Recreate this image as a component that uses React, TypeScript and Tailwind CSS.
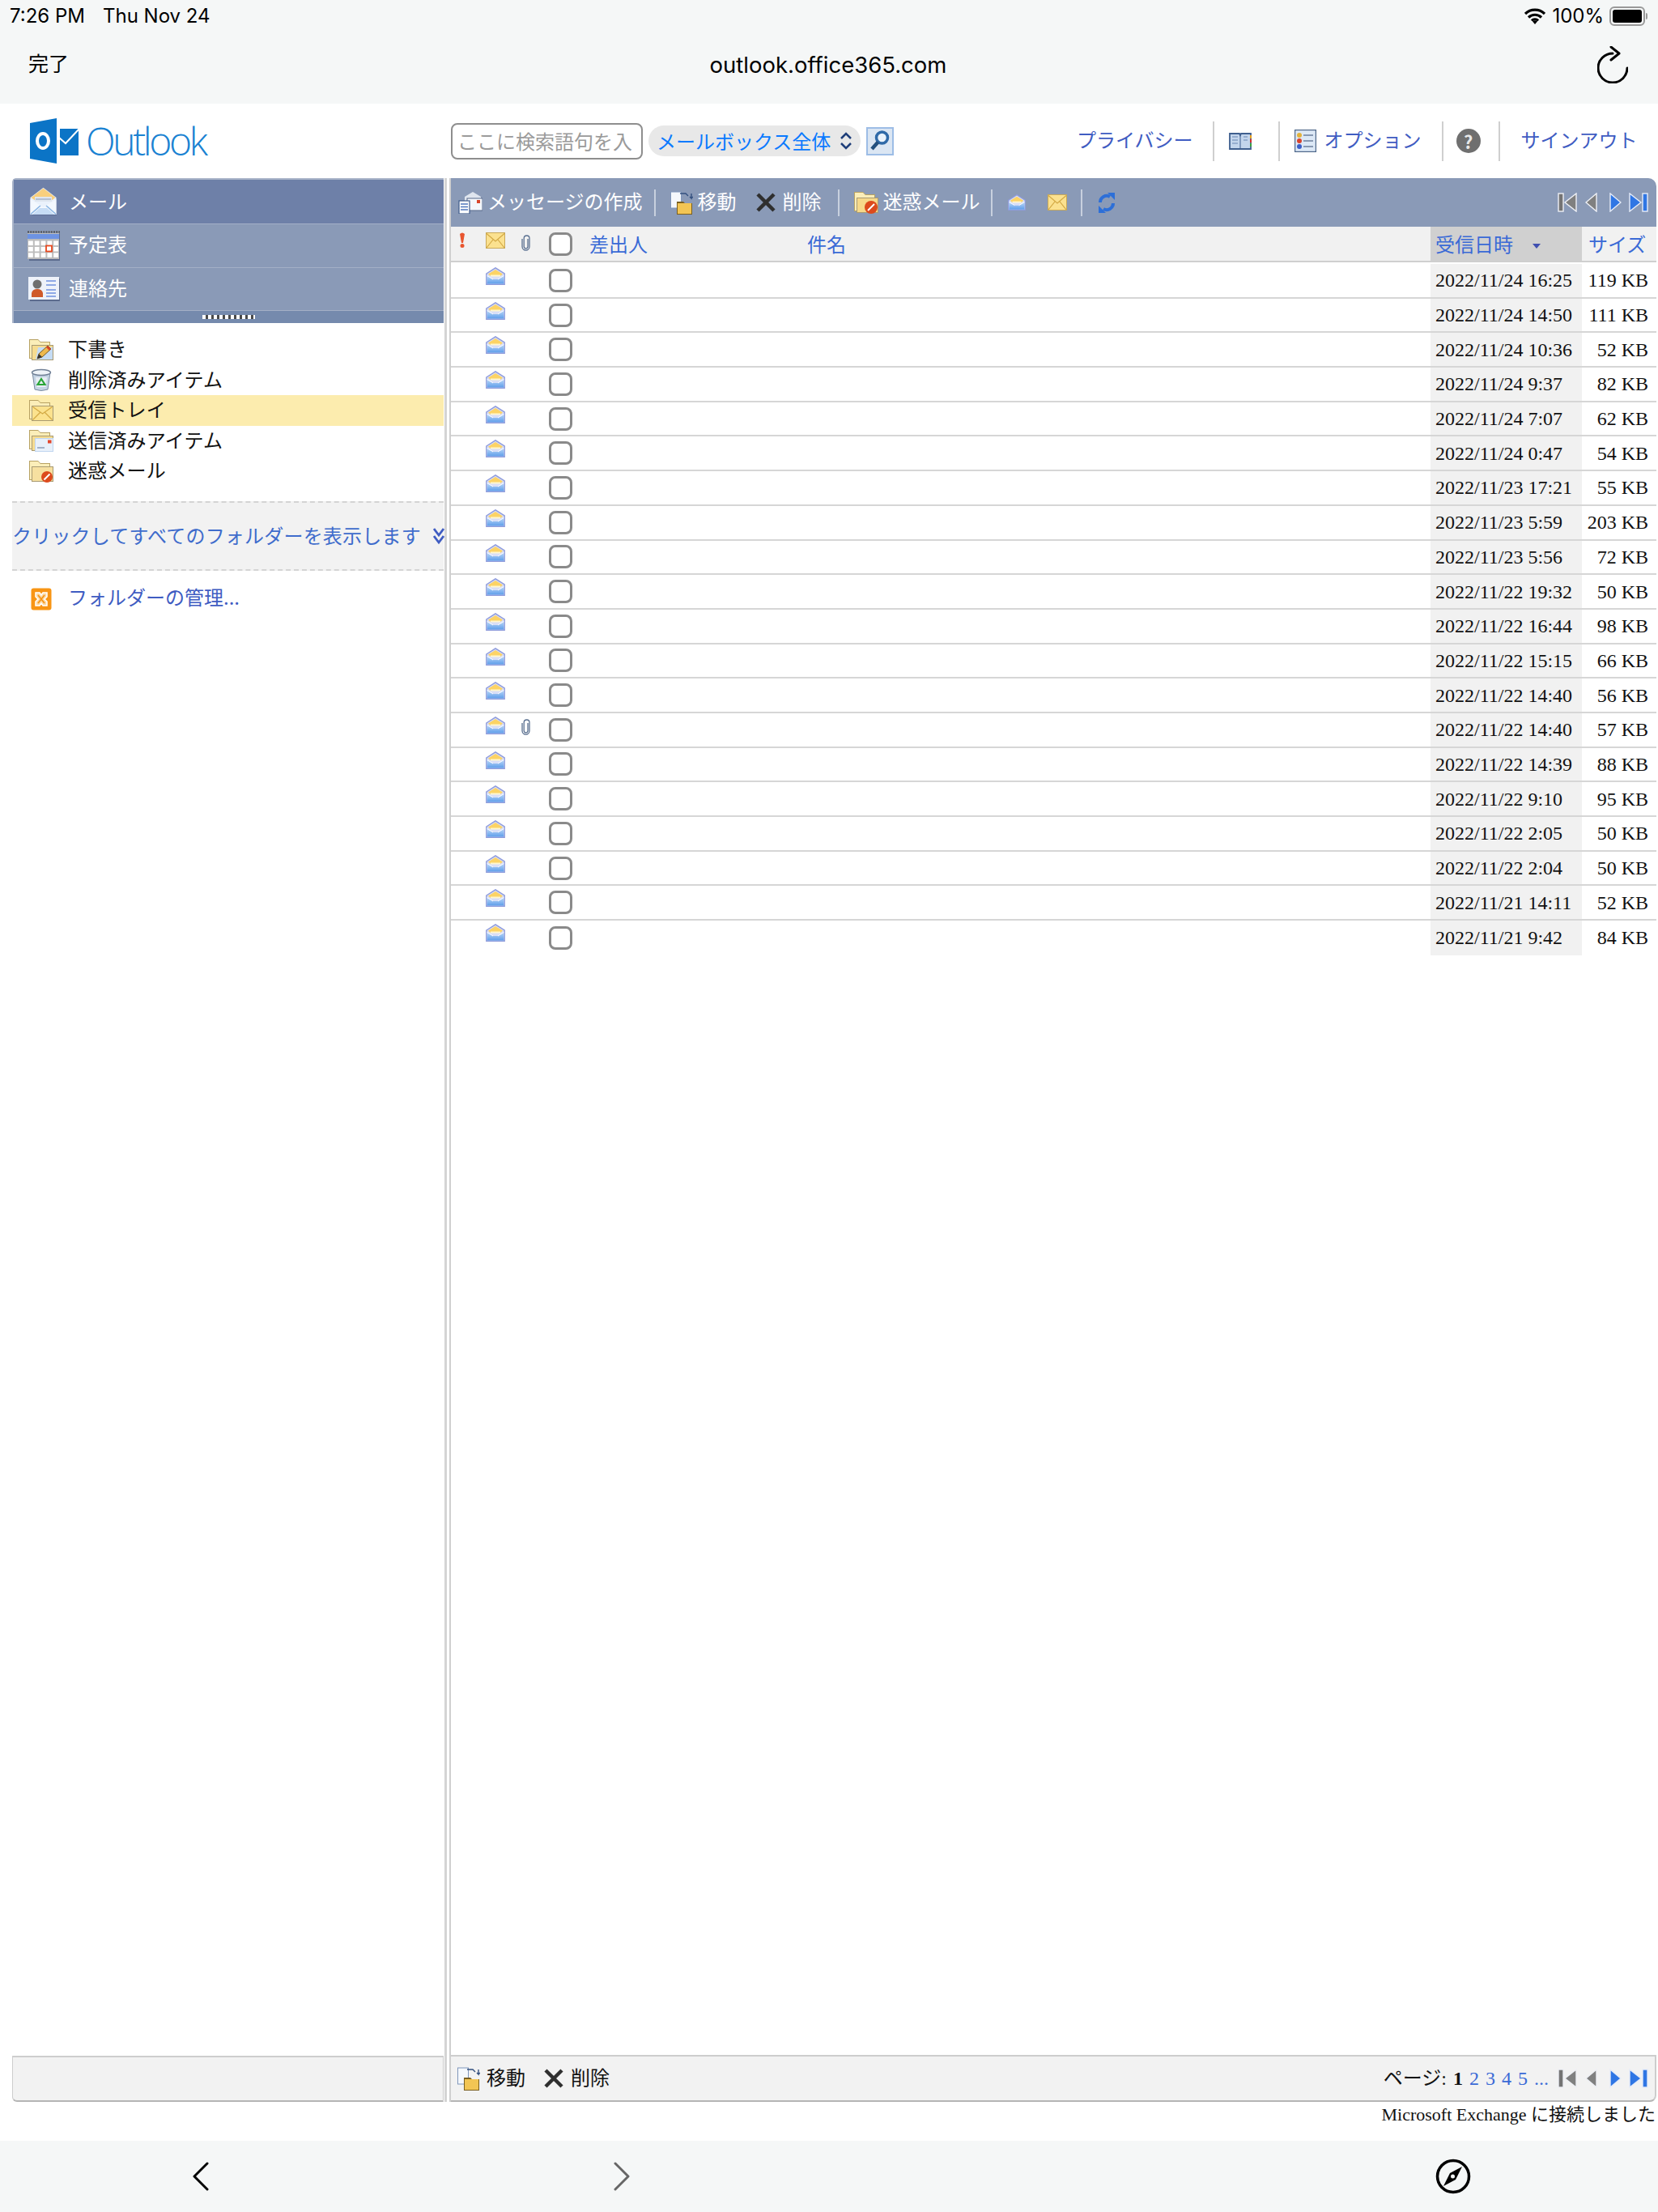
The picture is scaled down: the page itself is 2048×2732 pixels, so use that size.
import React from "react";

const rows: { date: string; size: string; clip?: boolean }[] = [
  { date: "2022/11/24 16:25", size: "119 KB" },
  { date: "2022/11/24 14:50", size: "111 KB" },
  { date: "2022/11/24 10:36", size: "52 KB" },
  { date: "2022/11/24 9:37", size: "82 KB" },
  { date: "2022/11/24 7:07", size: "62 KB" },
  { date: "2022/11/24 0:47", size: "54 KB" },
  { date: "2022/11/23 17:21", size: "55 KB" },
  { date: "2022/11/23 5:59", size: "203 KB" },
  { date: "2022/11/23 5:56", size: "72 KB" },
  { date: "2022/11/22 19:32", size: "50 KB" },
  { date: "2022/11/22 16:44", size: "98 KB" },
  { date: "2022/11/22 15:15", size: "66 KB" },
  { date: "2022/11/22 14:40", size: "56 KB" },
  { date: "2022/11/22 14:40", size: "57 KB", clip: true },
  { date: "2022/11/22 14:39", size: "88 KB" },
  { date: "2022/11/22 9:10", size: "95 KB" },
  { date: "2022/11/22 2:05", size: "50 KB" },
  { date: "2022/11/22 2:04", size: "50 KB" },
  { date: "2022/11/21 14:11", size: "52 KB" },
  { date: "2022/11/21 9:42", size: "84 KB" },
];

const serif = "font-['Liberation_Serif','Noto_Sans_CJK_JP',serif]";
const columns =
  "grid grid-cols-[35px_46px_30px_54px_270px_775px_187px_92px]";

function MailOpen({ className }: { className: string }) {
  return (
    <svg viewBox="0 0 24 22" className={className}>
      <defs>
        <linearGradient id="mailBody" x1="0" y1="0" x2="0" y2="1">
          <stop offset="0" stopColor="#bcd8f8" />
          <stop offset="1" stopColor="#5f9eea" />
        </linearGradient>
      </defs>
      <path d="M.8 8 12 .8 23.200 8v13.200H.8Z" fill="#d8def7" stroke="#8e9bdb" strokeWidth="1.400" />
      <path d="M3 8.500 12 3l9 5.500-3 2.500H6Z" fill="#fcd365" />
      <path d="M6 9.500h12v2H6Z" fill="#fff6cf" />
      <path d="M1.600 10.500 9 15h6l7.400-4.500v10H1.600Z" fill="url(#mailBody)" />
      <path d="M1.600 10.500 9 15M22.400 10.500 15 15" stroke="#fff" strokeWidth="1" />
    </svg>
  );
}

function MailOpenLarge() {
  return (
    <svg viewBox="0 0 34 36" className="h-[36px] w-[34px]">
      <path d="M2 35h31V15Z" fill="#5d6d96" />
      <path d="M.5 13 16.500.8 32.500 13v21H.5Z" fill="#eaf1fb" />
      <path d="M1.500 13 16.500 1.500l15 11.500-4 3h-22Z" fill="#f8cf7e" />
      <path d="M6 12h21v6H6Z" fill="#dfe6ef" />
      <path d="M7 15h19" stroke="#8a9ab7" strokeWidth="1" />
      <path d="M.5 15 16.500 25 32.500 15v19H.5Z" fill="#f3f8fe" />
      <path d="M1 33.500 13 23M32 33.500 20 23" stroke="#8cb6e4" strokeWidth="1.600" />
      <path d="M3 34h27l-9-8h-9Z" fill="#c6dcf5" />
    </svg>
  );
}

function Envelope({ className }: { className: string }) {
  return (
    <svg viewBox="0 0 24 20" className={className}>
      <rect x=".5" y=".5" width="23" height="19" fill="#fbe18f" stroke="#c9a958" />
      <path d="M1 1.500 12 11 23 1.500M1 19l8-10M23 19l-8-10" fill="none" stroke="#d3a944" strokeWidth="1.200" />
    </svg>
  );
}

function Clip({ className }: { className: string }) {
  return (
    <svg viewBox="0 0 15 20" className={className} fill="none">
      <path
        d="M10 5v9.500a2.400 2.400 0 0 1-4.800 0V4.400a3.400 3.400 0 0 1 6.800 0v10.200a4.500 4.500 0 0 1-9 0V5"
        stroke="#5a7090"
        strokeWidth="1.300"
      />
    </svg>
  );
}

function Checkbox() {
  return <span className="block h-[29px] w-[29px] rounded-[8px] border-[3px] border-[#8a8a8a] bg-white" />;
}

function FolderBase({ children, fill = "#f6dc8f" }: { children?: React.ReactNode; fill?: string }) {
  return (
    <svg viewBox="0 0 30 28" className="h-[28px] w-[30px]">
      <path d="M0 1h11l3 3h12v21H0Z" fill="#b8a263" />
      <path d="M1 2h10l3 3h11v19H1Z" fill="#fbeeb9" />
      <path d="M3 8h27v19H3Z" fill="#a99b73" />
      <path d="M4 9h25v17H4Z" fill={fill} />
      {children}
    </svg>
  );
}

function JunkBadge({ cx, cy, r }: { cx: number; cy: number; r: number }) {
  return (
    <>
      <circle cx={cx} cy={cy} r={r} fill="#dc4a1c" />
      <path d={`M${cx - r / 2} ${cy + r / 2}L${cx + r / 2} ${cy - r / 2}`} stroke="#fff" strokeWidth="2" />
    </>
  );
}

function DraftsIcon() {
  return (
    <FolderBase>
      <path d="M11 11h18v15H8Z" fill="#c5dcf5" />
      <path d="M10 25l2-6 11-10 4 4-11 10Z" fill="#eeb94e" stroke="#7a5a20" strokeWidth="1" />
      <path d="M21 11l4 4 2-2-4-4Z" fill="#d8452a" />
      <path d="M10 25l2-6 4 4Z" fill="#333" />
    </FolderBase>
  );
}

function DeletedIcon() {
  return (
    <svg viewBox="0 0 26 28" className="h-[28px] w-[26px]">
      <path d="M2 5h22l-3 21q-8 3-16 0Z" fill="#c5d4e4" stroke="#7b8ba0" strokeWidth="1" />
      <ellipse cx="13" cy="5" rx="11.500" ry="3.500" fill="#eef3f8" stroke="#6f7f95" strokeWidth="1.400" />
      <path d="M6 11h14l-1.500 12h-11Z" fill="#e8eef4" />
      <path d="M13 13l4.500 7h-9Z" fill="none" stroke="#2aa538" strokeWidth="2.200" />
    </svg>
  );
}

function InboxIcon() {
  return (
    <FolderBase fill="#fbe28e">
      <path d="M4.500 9.500 16.500 18 28.500 9.500M4.500 25.500l9-9M28.500 25.500l-9-9" fill="none" stroke="#d3a944" strokeWidth="1.200" />
    </FolderBase>
  );
}

function SentIcon() {
  return (
    <FolderBase>
      <path d="M7 11h23v17H7Z" fill="#c0d6f0" />
      <path d="M8 12h21v15H8Z" fill="#e8f0fa" />
      <rect x="23" y="13.500" width="4.500" height="4" fill="#e2462c" />
      <path d="M10 23h9" stroke="#8ea3bc" strokeWidth="1.600" />
    </FolderBase>
  );
}

function JunkFolderIcon() {
  return (
    <FolderBase fill="#f6e0a0">
      <JunkBadge cx={22} cy={21} r={7} />
    </FolderBase>
  );
}

function ManageIcon() {
  return (
    <svg viewBox="0 0 26 28" className="h-[28px] w-[26px]">
      <rect x=".5" y=".5" width="25" height="27" rx="3" fill="#f89514" />
      <path d="M6 6h5l2 3 2-3h5v5l-3 3 3 3v5h-5l-2-3-2 3H6v-5l3-3-3-3Z" fill="#fbd9a4" stroke="#fff" strokeWidth="1.500" />
      <path d="M9 9l8 10M17 9 9 19" stroke="#f89514" strokeWidth="1.800" />
    </svg>
  );
}

function CalendarIcon() {
  return (
    <svg viewBox="0 0 40 37" className="h-[37px] w-[40px]">
      <rect x="2" y="3" width="38" height="34" fill="#5c6c8e" />
      <path d="M0 1.500h40" stroke="#4b4b4b" strokeWidth="2" strokeDasharray="2 1.200" />
      <rect x="0" y="3" width="39" height="32" fill="#bcbcbc" />
      <rect x="0" y="4" width="39" height="6" fill="#6d93e2" />
      {[0, 1, 2].map((r) =>
        [0, 1, 2, 3, 4].map((c) => (
          <rect key={`${r}-${c}`} x={1 + c * 7.8} y={12.5 + r * 7.4} width="5.800" height="5.600" fill="#fff" />
        )),
      )}
      <rect x="23" y="18.500" width="7" height="7" fill="#fff" stroke="#e8491f" strokeWidth="1.800" />
    </svg>
  );
}

function ContactsIcon() {
  return (
    <svg viewBox="0 0 39 30" className="h-[30px] w-[39px]">
      <rect x="2" y="2" width="37" height="28" fill="#5c6c8e" />
      <rect x="0" y="0" width="38" height="28" fill="#eef2fa" />
      <circle cx="11" cy="9" r="5.500" fill="#6f6f6f" />
      <path d="M4 25v-5q1-5 7-5t7 5v5Z" fill="#cf5a2a" />
      <path d="M22 5h12M22 10h12M22 16h12M22 20h12M22 24h12" stroke="#8fa9e6" strokeWidth="1.800" />
    </svg>
  );
}

function ComposeIcon() {
  return (
    <svg viewBox="0 0 30 28" className="h-[28px] w-[30px]">
      <path d="M8 7l10-6 10 6v14H8Z" fill="#dfe5ee" />
      <rect x="11" y="9" width="19" height="15" fill="#f4f7fb" stroke="#57698a" strokeWidth="1" />
      <rect x="23" y="11" width="4" height="4" fill="#d8452a" />
      <rect x="1" y="12" width="13" height="16" fill="#fff" stroke="#3f5b8c" strokeWidth="1.200" />
      <path d="M3 16h9M3 19.500h9M3 23h9" stroke="#4f77bd" strokeWidth="1.400" />
    </svg>
  );
}

function MoveIcon() {
  return (
    <svg viewBox="0 0 28 29" className="h-[29px] w-[28px]">
      <rect x=".5" y="1" width="13" height="20" fill="#f5f8fc" stroke="#7f96bb" />
      <path d="M12 3h7l3 3M26 3v6l-2-2M26 9l2-2" fill="none" stroke="#33507f" strokeWidth="1.400" />
      <path d="M8 13h8l2 2h9v14H8Z" fill="#7a5f1f" />
      <rect x="9" y="15" width="17" height="13" fill="#f2c554" />
    </svg>
  );
}

function CrossIcon({ className }: { className: string }) {
  return (
    <svg viewBox="0 0 24 24" className={className}>
      <path d="M2 2l20 20M22 2 2 22" stroke="#2f2f2f" strokeWidth="4.500" />
    </svg>
  );
}

function JunkIcon() {
  return (
    <FolderBase fill="#f6d98a">
      <JunkBadge cx={21} cy={20} r={8} />
    </FolderBase>
  );
}

function RefreshBlue() {
  return (
    <svg viewBox="0 0 22 25" className="h-[25px] w-[22px]" fill="none">
      <path d="M3 12A8 8 0 0 1 15 5" stroke="#2d6fd8" strokeWidth="4" />
      <path d="M12 0h9v9Z" fill="#2d6fd8" />
      <path d="M19 13A8 8 0 0 1 7 20" stroke="#2d6fd8" strokeWidth="4" />
      <path d="M10 25H1v-9Z" fill="#2d6fd8" />
    </svg>
  );
}

function Pager() {
  return (
    <div className="flex items-center">
      <svg viewBox="0 0 24 24" className="h-[24px] w-[24px]">
        <rect x="1" y="1" width="6" height="22" fill="#747474" stroke="#eef0f5" strokeWidth="1.400" />
        <path d="M23 1v22L9 12Z" fill="#808080" stroke="#eef0f5" strokeWidth="1.400" />
      </svg>
      <svg viewBox="0 0 15 24" className="ml-[10px] h-[24px] w-[15px]">
        <path d="M14 1v22L1 12Z" fill="#808080" stroke="#eef0f5" strokeWidth="1.400" />
      </svg>
      <svg viewBox="0 0 15 24" className="ml-[15px] h-[24px] w-[15px]">
        <path d="M1 1v22l13-11Z" fill="#2f76e4" stroke="#e6ecf8" strokeWidth="1.400" />
      </svg>
      <svg viewBox="0 0 24 24" className="ml-[9px] h-[24px] w-[24px]">
        <path d="M1 1v22l14-11Z" fill="#2f76e4" stroke="#e6ecf8" strokeWidth="1.400" />
        <rect x="17" y="1" width="6" height="22" fill="#2f76e4" stroke="#e6ecf8" strokeWidth="1.400" />
      </svg>
    </div>
  );
}

function NavRow({ icon, label, active, height }: { icon: React.ReactNode; label: string; active?: boolean; height: string }) {
  return (
    <div
      className={`flex items-center border-b border-[#a3afc6] ${height} ${active ? "bg-[#6e80a8]" : "bg-[#8a9ab7]"}`}
    >
      <div className="flex w-[68px] justify-center pl-[6px]">{icon}</div>
      <span className={`${active ? "pb-[3px]" : "pb-[5px]"} text-[24px] leading-none text-white`}>{label}</span>
    </div>
  );
}

function FolderRow({ icon, label, active }: { icon: React.ReactNode; label: string; active?: boolean }) {
  return (
    <div className={`flex h-[37.5px] items-center ${active ? "bg-[#fcecae]" : ""}`}>
      <div className="flex w-[69px] justify-center pl-[2px]">{icon}</div>
      <span className="pb-[3px] text-[24px] leading-none tracking-[0.2px] text-[#111]">{label}</span>
    </div>
  );
}

function Sep({ className }: { className: string }) {
  return <span className={`block w-[2px] ${className}`} />;
}

function Label({ children, className = "" }: { children: React.ReactNode; className?: string }) {
  return <span className={`pb-[4px] ${className}`}>{children}</span>;
}

export default function App() {
  return (
    <div className="flex h-[2732px] w-[2048px] flex-col overflow-hidden bg-white font-['Noto_Sans_CJK_JP',sans-serif]">
      {/* iOS status + browser bar */}
      <div className="h-[128px] shrink-0 bg-[#f5f7f7] font-['Inter','Noto_Sans_CJK_JP',sans-serif] text-black">
        <div className="flex h-[40px] items-center justify-between pl-[12px] pr-[13px]">
          <div className="flex gap-[22px] text-[24px]">
            <span>7:26 PM</span>
            <span>Thu Nov 24</span>
          </div>
          <div className="flex items-center">
            <svg viewBox="0 0 26 20" className="h-[20px] w-[26px]">
              <path d="M1 7a17 17 0 0 1 24 0M5 11.500a11.500 11.500 0 0 1 16 0M9 15.500a5.500 5.500 0 0 1 8 0" fill="none" stroke="#000" strokeWidth="3.200" />
              <path d="M13 20l-3-3.500a4 4 0 0 1 6 0Z" fill="#000" />
            </svg>
            <span className="ml-[8px] text-[24px]">100%</span>
            <div className="ml-[7px] flex h-[24px] w-[44px] items-center rounded-[6px] border-2 border-[#999] p-[2px]">
              <span className="block h-full w-full rounded-[3px] bg-black" />
            </div>
            <span className="ml-[1px] block h-[8px] w-[2px] rounded-r-sm bg-[#999]" />
          </div>
        </div>
        <div className="flex h-[80px] items-center pl-[35px] pr-[37px]">
          <span className="flex-1 text-[25px]">完了</span>
          <span className="pt-[2px] text-[27.5px]">outlook.office365.com</span>
          <div className="flex flex-1 justify-end">
            <svg viewBox="0 0 38 46" className="h-[46px] w-[38px]" fill="none" stroke="#000" strokeWidth="3" strokeLinecap="round" strokeLinejoin="round">
              <path d="M37 26A18 18 0 1 1 19 8" transform="translate(0 1)" />
              <path d="M17 1l10 8-10 8" />
            </svg>
          </div>
        </div>
      </div>

      {/* page header */}
      <div className="flex h-[92px] shrink-0 items-center">
        <div className="flex w-[557px] items-center pl-[37px]">
          <svg viewBox="0 0 60 56" className="h-[56px] w-[60px]">
            <path d="M0 6 33 0v56L0 50Z" fill="#0b74c6" />
            <ellipse cx="16" cy="28" rx="7" ry="9" fill="none" stroke="#fff" strokeWidth="4" />
            <path d="M37 13h23v33H37Z" fill="#0b74c6" />
            <path d="M36 24l8 7 17-18" fill="none" stroke="#fff" strokeWidth="2" />
          </svg>
          <span className="ml-[9px] font-['Open_Sans',sans-serif] text-[48px] leading-none font-light tracking-[-3.4px] text-[#1a82d2]">
            Outlook
          </span>
        </div>
        <div className="flex h-[45px] w-[237px] items-center overflow-hidden rounded-[8px] border-2 border-[#8e8e8e] pl-[6px] text-[24px] whitespace-nowrap text-[#9a9a9a]">
          ここに検索語句を入
        </div>
        <div className="ml-[7px] flex h-[38px] w-[262px] items-center rounded-full bg-[#e8e8e8] pl-[10px] text-[24px] text-[#0a7aff]">
          メールボックス全体
          <svg viewBox="0 0 16 22" className="ml-[11px] h-[22px] w-[16px]" fill="none" stroke="#1f3f7a" strokeWidth="2.500">
            <path d="M2 8l6-6 6 6M2 14l6 6 6-6" />
          </svg>
        </div>
        <div className="ml-[7px] flex h-[35px] w-[34px] items-center justify-center border-2 border-[#9dbde6] bg-[#dbe6f3]">
          <svg viewBox="0 0 24 26" className="h-[26px] w-[24px]" fill="none">
            <circle cx="14.500" cy="9" r="7" stroke="#2f6aa8" strokeWidth="3.500" fill="#eaf3fc" />
            <path d="M9.500 14.500 2 23" stroke="#23507f" strokeWidth="4.500" />
          </svg>
        </div>
        <div className="ml-[226px] flex h-[49px] items-center text-[24px] leading-none text-[#3f5cc2]">
          <Label>プライバシー</Label>
          <Sep className="ml-[24px] h-full bg-[#cfcfcf]" />
          <svg viewBox="0 0 29 22" className="ml-[18px] h-[22px] w-[29px]">
            <path d="M1 2h12l1 2 1-2h12v19H1Z" fill="#c3d5ec" stroke="#3f5f8f" strokeWidth="1.800" />
            <path d="M14 4v16" stroke="#3f5f8f" />
            <path d="M4 6h7M4 10h7M4 14h7M18 6h5M18 10h5" stroke="#6a88b2" strokeWidth="1.200" />
            <path d="M27 4v4" stroke="#e6a020" strokeWidth="2" />
            <path d="M27 9v4" stroke="#d03030" strokeWidth="2" />
            <path d="M27 14v4" stroke="#3aa040" strokeWidth="2" />
          </svg>
          <Sep className="ml-[32px] h-full bg-[#cfcfcf]" />
          <svg viewBox="0 0 27 28" className="ml-[18px] h-[28px] w-[27px]">
            <rect x=".5" y=".5" width="26" height="27" fill="#dce8f6" stroke="#4d6689" strokeWidth="1.400" />
            <path d="M11 7h12M11 14h12M11 21h12" stroke="#6c7f9c" strokeWidth="1.500" />
            <circle cx="6" cy="7" r="3" fill="#e2b23c" />
            <circle cx="6" cy="14" r="3" fill="#d9432d" />
            <circle cx="6" cy="21" r="3" fill="#3c5fc8" />
          </svg>
          <Label className="ml-[10px]">オプション</Label>
          <Sep className="ml-[25px] h-full bg-[#cfcfcf]" />
          <span className="ml-[16px] flex h-[30px] w-[30px] items-center justify-center rounded-full bg-[#6f6f6f] text-[22px] font-bold text-[#e8e8e8]">?</span>
          <Sep className="ml-[22px] h-full bg-[#cfcfcf]" />
          <Label className="ml-[26px]">サインアウト</Label>
        </div>
      </div>

      {/* main panes */}
      <div className="flex min-h-0 flex-1 pl-[15px]">
        {/* sidebar */}
        <div className="flex w-[533px] flex-col">
          <div className="rounded-tl-[5px] border-t-2 border-l-2 border-[#a9b4c9]">
            <NavRow icon={<MailOpenLarge />} label="メール" active height="h-[55px]" />
            <NavRow icon={<CalendarIcon />} label="予定表" height="h-[54px]" />
            <NavRow icon={<ContactsIcon />} label="連絡先" height="h-[53px]" />
            <div className="flex h-[15px] items-center justify-center bg-[#758aad]">
              <span className="block h-[5px] w-[65px] bg-[repeating-linear-gradient(90deg,#fff_0,#fff_4px,#4a4a4a_4px,#4a4a4a_7px)]" />
            </div>
          </div>
          <div className="mt-[14px]">
            <FolderRow icon={<DraftsIcon />} label="下書き" />
            <FolderRow icon={<DeletedIcon />} label="削除済みアイテム" />
            <FolderRow icon={<InboxIcon />} label="受信トレイ" active />
            <FolderRow icon={<SentIcon />} label="送信済みアイテム" />
            <FolderRow icon={<JunkFolderIcon />} label="迷惑メール" />
          </div>
          <div className="mt-[18px] flex h-[86px] items-center justify-between whitespace-nowrap border-y-2 border-dashed border-[#d4d4d4] bg-[#f2f2f2] text-[24px] leading-none tracking-[0.2px] text-[#3f6ccc]">
            <span className="pb-[2px]">クリックしてすべてのフォルダーを表示します</span>
            <svg viewBox="0 0 14 22" className="mr-[-1px] h-[22px] w-[14px]" fill="none" stroke="#3f5cc2" strokeWidth="2.800">
              <path d="M1 2l6 8 6-8M1 11l6 8 6-8" />
            </svg>
          </div>
          <div className="mt-[20px] flex h-[30px] items-center">
            <div className="flex w-[69px] justify-center pl-[2px]"><ManageIcon /></div>
            <span className="pb-[5px] text-[24px] leading-none text-[#3f5cc2]">フォルダーの管理...</span>
          </div>
          <div className="flex-1" />
          <div className="h-[57px] rounded-bl-[6px] border-t-2 border-b-2 border-l border-r border-t-[#cdcdcd] border-b-[#b5b5b5] border-l-[#cdcdcd] border-r-[#cdcdcd] bg-[#f2f2f2]" />
        </div>

        {/* splitter */}
        <div className="w-[7px] pl-[1px]">
          <span className="block h-full w-[3px] bg-[#d4d4d4]" />
        </div>

        {/* message list */}
        <div className="flex w-[1491px] flex-col border-l-2 border-[#cfcfcf]">
          <div className="flex h-[60px] items-center rounded-tr-[10px] bg-[#8a9ab7] text-[24px] leading-none text-white">
            <div className="ml-[9px]"><ComposeIcon /></div>
            <Label className="ml-[6px]">メッセージの作成</Label>
            <Sep className="ml-[14px] h-[33px] bg-[#c8d0de]" />
            <div className="ml-[18px]"><MoveIcon /></div>
            <Label className="ml-[6px]">移動</Label>
            <div className="ml-[24px]"><CrossIcon className="h-[24px] w-[24px]" /></div>
            <Label className="ml-[9px]">削除</Label>
            <Sep className="ml-[20px] h-[33px] bg-[#c8d0de]" />
            <div className="ml-[18px]"><JunkIcon /></div>
            <Label className="ml-[6px]">迷惑メール</Label>
            <Sep className="ml-[13px] h-[33px] bg-[#c8d0de]" />
            <div className="ml-[19px]"><MailOpen className="h-[20px] w-[22px]" /></div>
            <div className="ml-[27px]"><Envelope className="h-[20px] w-[24px]" /></div>
            <Sep className="ml-[17px] h-[33px] bg-[#c8d0de]" />
            <div className="ml-[19px]"><RefreshBlue /></div>
            <div className="ml-auto mr-[10px]"><Pager /></div>
          </div>

          <div className={`${columns} h-[44px] border-b-2 border-[#cfcfcf] bg-[#f1f1f1] text-[24px] leading-none text-[#3a6ad6]`}>
            <div className="flex justify-center pt-[7px] pr-[8px]">
              <svg viewBox="0 0 8 19" className="h-[19px] w-[8px]">
                <path d="M1 2q3-3 6 0l-2 11H3Z" fill="#e8552f" />
                <circle cx="4" cy="16.500" r="2.500" fill="#e8552f" />
              </svg>
            </div>
            <div className="flex justify-center pt-[7px] pr-[7px]"><Envelope className="h-[20px] w-[24px]" /></div>
            <div className="flex justify-center pt-[10px] pr-[7px]"><Clip className="h-[20px] w-[15px]" /></div>
            <div className="flex items-center justify-center pr-[6px]"><Checkbox /></div>
            <div className="flex items-center pb-[1px] pl-[6px]">差出人</div>
            <div className="flex items-center pb-[1px] pl-[5px]">件名</div>
            <div className="flex items-center bg-[#d0d0d0] pb-[1px] pl-[6px]">
              受信日時
              <span className="ml-[24px] mt-[6px] block h-0 w-0 border-x-[5px] border-t-[6px] border-x-transparent border-t-[#3f4fb0]" />
            </div>
            <div className="flex items-center pb-[1px] pl-[8px]">サイズ</div>
          </div>

          <div className="mt-[2px]">
            {rows.map((r, i) => (
              <div
                key={i}
                className={`${columns} h-[42.7px] ${i < rows.length - 1 ? "border-b-2 border-[#d6d6d6]" : ""} ${serif} text-[24px] leading-none text-[#111]`}
              >
                <div />
                <div className="flex justify-center pt-[4px] pr-[7px]"><MailOpen className="h-[22px] w-[24px]" /></div>
                <div className="flex justify-center pt-[7px] pr-[7px]">{r.clip && <Clip className="h-[20px] w-[15px]" />}</div>
                <div className="flex items-center justify-center pr-[6px]"><Checkbox /></div>
                <div />
                <div />
                <div className="flex items-center bg-[#f1f1f1] pl-[6px] whitespace-nowrap">{r.date}</div>
                <div className="flex items-center justify-end pr-[10px]">{r.size}</div>
              </div>
            ))}
          </div>

          <div className="flex-1" />

          <div className="flex h-[58px] items-center rounded-br-[8px] border-y-2 border-r-2 border-t-[#cdcdcd] border-b-[#b5b5b5] border-r-[#cdcdcd] bg-[#f2f2f2] text-[24px] leading-none text-[#111]">
            <div className="ml-[8px]"><MoveIcon /></div>
            <Label className="ml-[8px]">移動</Label>
            <div className="ml-[23px]"><CrossIcon className="h-[24px] w-[24px]" /></div>
            <Label className="ml-[9px]">削除</Label>
            <div className={`ml-auto mr-[8px] flex items-center ${serif}`}>
              <span>ページ:</span>
              <span className="ml-[8px] font-bold">1</span>
              <span className="ml-[8px] text-[#3a6ad6]">2</span>
              <span className="ml-[8px] text-[#3a6ad6]">3</span>
              <span className="ml-[8px] text-[#3a6ad6]">4</span>
              <span className="ml-[8px] text-[#3a6ad6]">5</span>
              <span className="ml-[8px] text-[#3a6ad6]">...</span>
              <div className="ml-[11px]"><Pager /></div>
            </div>
          </div>
        </div>
      </div>

      <div className={`flex h-[48px] shrink-0 justify-end pr-[3px] pt-[3px] ${serif} text-[22px] leading-[26px] text-[#111]`}>
        Microsoft Exchange に接続しました
      </div>

      {/* safari bottom toolbar */}
      <div className="relative flex h-[88px] shrink-0 items-center bg-[#f5f7f7]">
        <svg viewBox="0 0 20 36" className="ml-[238px] h-[36px] w-[20px]" fill="none" stroke="#000" strokeWidth="3" strokeLinecap="round" strokeLinejoin="round">
          <path d="M18 2 2 18l16 16" />
        </svg>
        <svg viewBox="0 0 20 36" className="ml-[500px] h-[36px] w-[20px]" fill="none" stroke="#666" strokeWidth="3" strokeLinecap="round" strokeLinejoin="round">
          <path d="M2 2l16 16L2 34" />
        </svg>
        <svg viewBox="0 0 44 44" className="ml-[995px] h-[44px] w-[44px]">
          <circle cx="22" cy="22" r="19.500" fill="none" stroke="#000" strokeWidth="3.500" />
          <path d="M33 10 25 26 10 34 18 18Z" fill="#000" />
          <circle cx="21.500" cy="22" r="2.500" fill="#f5f7f7" />
        </svg>
      </div>
    </div>
  );
}
